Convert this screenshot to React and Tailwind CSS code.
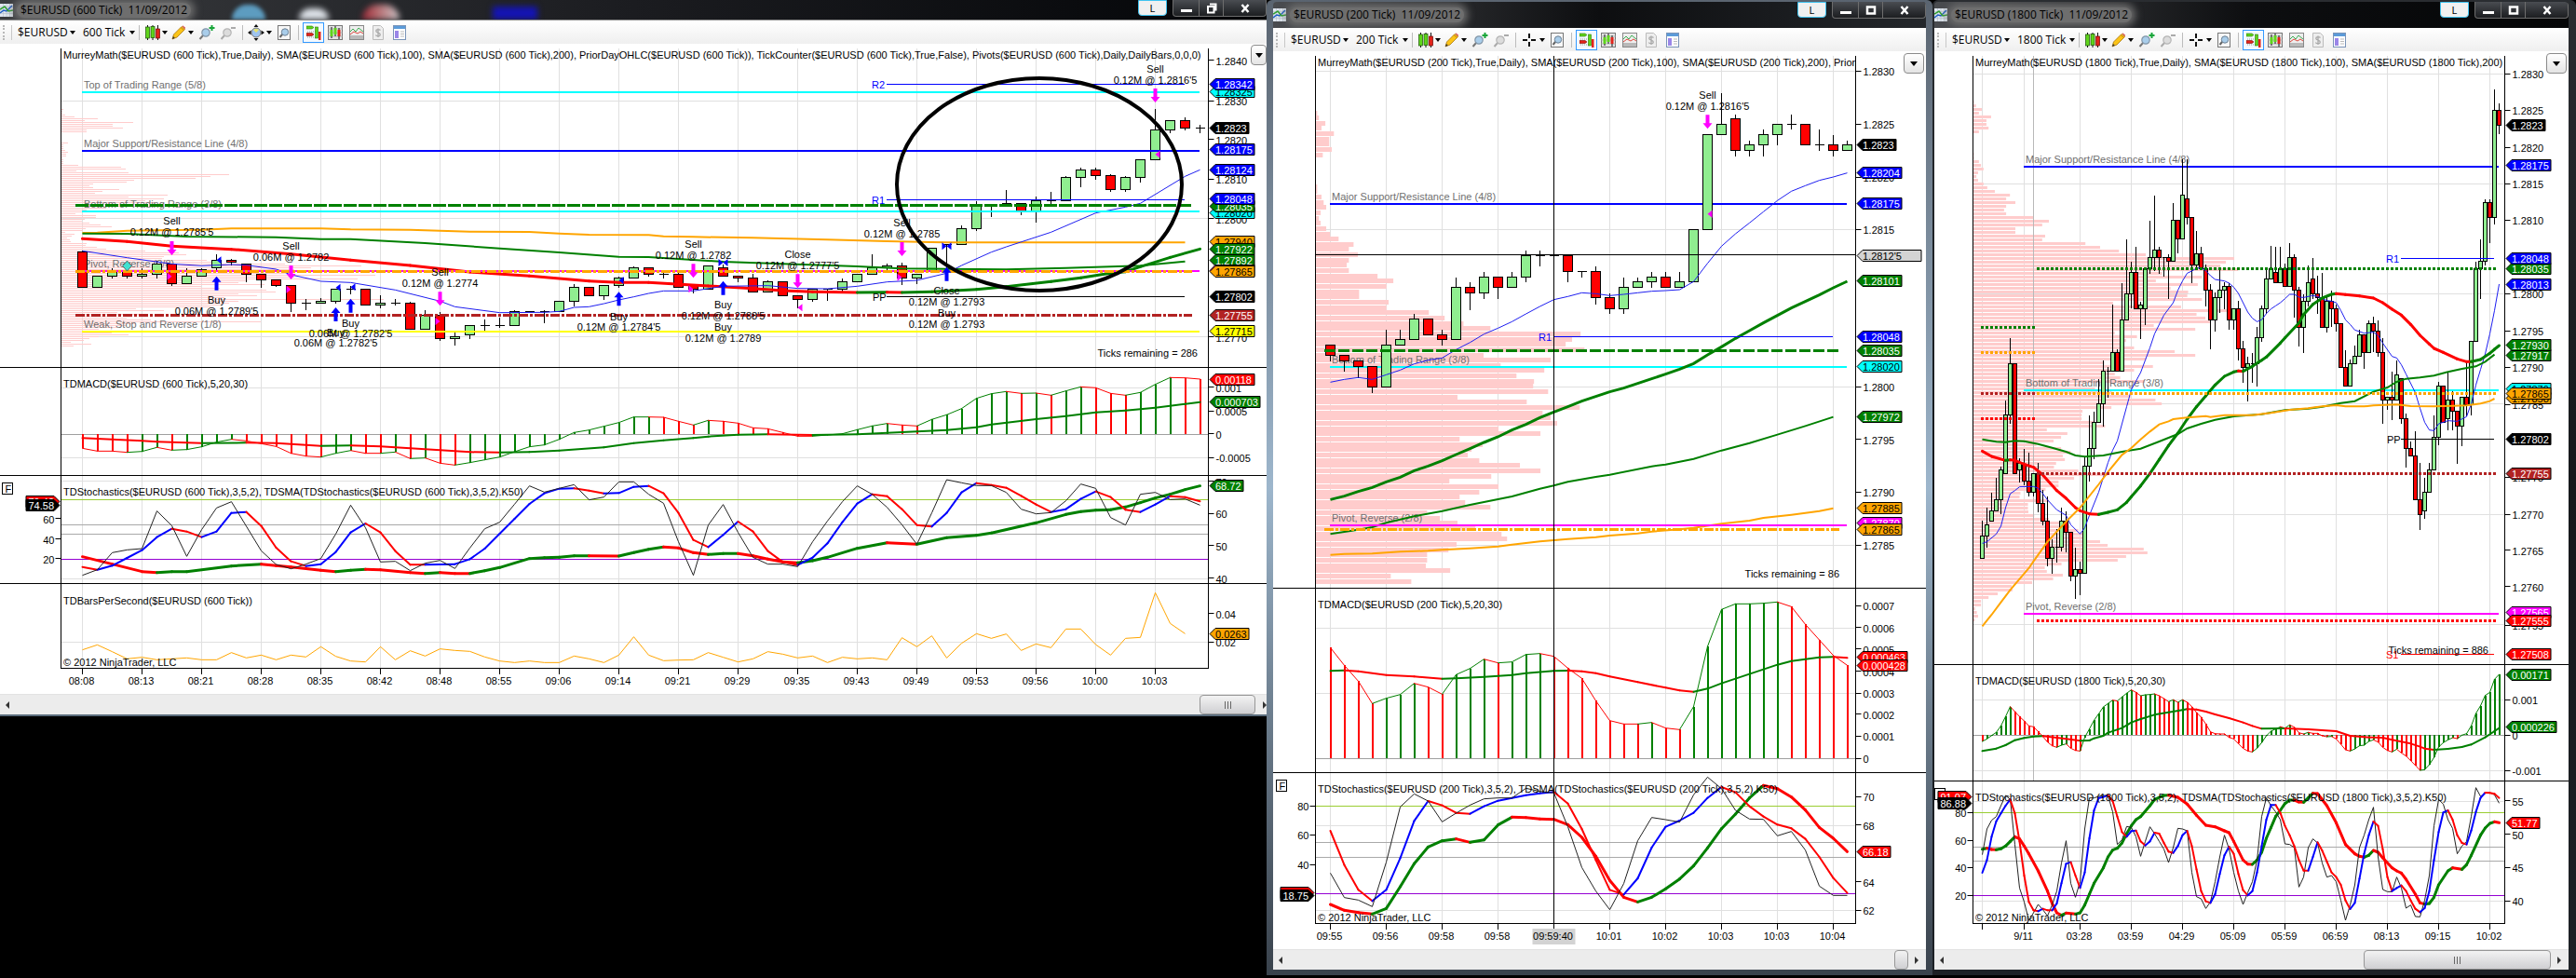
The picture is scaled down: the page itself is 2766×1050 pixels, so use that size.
import React from "react";
import { clsx } from "clsx";

// Series values are stored in thirds of a pixel, counted from the plot's top.
const makePlot = (x0, step, top, body) => ({
  x: (i) => x0 + step * i,
  y: (v) => top + v / 3,
  body,
});

const toPoints = (list) => list.map((p, i) => (Array.isArray(p) ? p : [i, p]));

/* ---------- plot parts ---------- */

const Line = ({ plot, data, color, width = 1 }) => (
  <polyline
    fill="none"
    stroke={color}
    strokeWidth={width}
    points={toPoints(data)
      .map(([i, v]) => `${plot.x(i)},${plot.y(v)}`)
      .join(" ")}
  />
);

const trendOf = (points, up, down) => {
  let last = down;
  return points.map(([, v], n) => {
    if (n > 0 && v < points[n - 1][1]) last = up;
    if (n > 0 && v > points[n - 1][1]) last = down;
    return last;
  });
};

// Line whose segments change colour with the direction
const TrendLine = ({ plot, data, up = "green", down = "red", width = 2 }) => {
  const points = toPoints(data);
  const colors = trendOf(points, up, down);
  return (
    <g strokeWidth={width} strokeLinecap="round">
      {points.slice(1).map(([i, v], n) => (
        <line
          key={n}
          x1={plot.x(points[n][0])}
          y1={plot.y(points[n][1])}
          x2={plot.x(i)}
          y2={plot.y(v)}
          stroke={colors[n + 1]}
        />
      ))}
    </g>
  );
};

const Histogram = ({ plot, data, zero }) => {
  const points = toPoints(data);
  const colors = trendOf(points, "green", "red");
  return (
    <g>
      {points.map(([i, v], n) => (
        <line
          key={n}
          x1={plot.x(i)}
          x2={plot.x(i)}
          y1={plot.y(zero)}
          y2={plot.y(v)}
          stroke={colors[n]}
          strokeWidth="2"
          shapeRendering="crispEdges"
        />
      ))}
      <TrendLine plot={plot} data={data} width={1} />
    </g>
  );
};

// [color, body top, body bottom, high, low]
const Candles = ({ plot, data }) => (
  <g stroke="black" shapeRendering="crispEdges">
    {data.map(([c, top, bottom, high, low], i) => {
      const x = plot.x(i);
      const px = (v) => Math.floor(plot.y(v)) + 0.5;
      return (
        <g key={i}>
          <line x1={x} x2={x} y1={px(high ?? top)} y2={px(low ?? bottom)} />
          <rect
            x={x - plot.body / 2}
            width={plot.body}
            y={px(top)}
            height={px(bottom) - px(top)}
            fill={c === "g" ? "#90ee90" : "red"}
          />
          {top === bottom && (
            <line x1={x - plot.body / 2} x2={x + plot.body / 2} y1={px(top)} y2={px(top)} />
          )}
        </g>
      );
    })}
  </g>
);

const Profile = ({ x, y, step, height, rows, unit = 1 }) => (
  <g fill="#ffcccc">
    {rows.map((w, i) => (
      <rect key={i} x={x} y={Math.round(y + step * i)} width={w / unit} height={height} />
    ))}
  </g>
);

const Level = ({ plot, v, x1, x2, color, width = 1, dash }) => (
  <line
    x1={x1}
    x2={x2}
    y1={Math.floor(plot.y(v)) + 0.5}
    y2={Math.floor(plot.y(v)) + 0.5}
    stroke={color}
    strokeWidth={width}
    strokeDasharray={dash}
    shapeRendering="crispEdges"
  />
);

const Label = ({ plot, x, v, children, color = "black", anchor = "start" }) => (
  <text x={x} y={Math.round(plot.y(v)) + 4} fill={color} textAnchor={anchor}>
    {children}
  </text>
);

const Arrow = ({ plot, i, tip, dir }) => {
  const x = plot.x(i);
  const y = plot.y(tip);
  const s = dir === "down" ? -1 : 1;
  return (
    <path
      d={`M${x} ${y} l-5 ${s * 6} h3 v${s * 9} h4 v${s * -9} h3 z`}
      fill={dir === "down" ? "magenta" : "blue"}
    />
  );
};

const Marker = ({ plot, i, v, color, dir }) => {
  const x = plot.x(i);
  const y = plot.y(v);
  return dir === "right" ? (
    <path d={`M${x - 5} ${y - 4} l5 4 l-5 4 z`} fill={color} />
  ) : (
    <path d={`M${x + 5} ${y - 4} l-5 4 l5 4 z`} fill={color} />
  );
};

// Executions: pairs of [text, v] centred on a bar plus an arrow
const Trade = ({ plot, i, tip, dir, lines }) => (
  <g>
    <Arrow plot={plot} i={i} tip={tip} dir={dir} />
    {lines.map(([text, v], n) => (
      <Label key={n} plot={plot} x={plot.x(i)} v={v} anchor="middle">
        {text}
      </Label>
    ))}
  </g>
);

const Tag = ({ plot, x, v, text, fill, color = "white", side = "right", width }) => {
  const y = Math.round(plot.y(v)) + 0.5;
  const w = width ?? text.length * 6;
  return side === "right" ? (
    <g>
      <path d={`M${x} ${y} l6 -6 h${w} v12 h${-w} z`} fill={fill} stroke="black" />
      <text x={x + 6} y={y + 4} fill={color}>
        {text}
      </text>
    </g>
  ) : (
    <g>
      <path d={`M${x} ${y} l-6 -6 h${-w} v12 h${w} z`} fill={fill} stroke="black" />
      <text x={x - 6} y={y + 4} fill={color} textAnchor="end">
        {text}
      </text>
    </g>
  );
};

const Scale = ({ plot, frame, labels, side = "right" }) =>
  labels.map(([text, v], n) => {
    const right = side === "right";
    const x = right ? frame.axisR : frame.axisL;
    return (
      <g key={n}>
        <line
          x1={x}
          x2={x + (right ? 6 : -6)}
          y1={Math.floor(plot.y(v)) - 0.5}
          y2={Math.floor(plot.y(v)) - 0.5}
          stroke="black"
        />
        <Label plot={plot} x={x + (right ? 8 : -7)} v={v} anchor={right ? "start" : "end"}>
          {text}
        </Label>
      </g>
    );
  });

const Pane = ({ id, frame, top, bottom, axisTop, plot, grid, children, scale }) => (
  <svg
    viewBox={`${frame.left} ${top} ${frame.width} ${bottom - top}`}
    className="block w-full font-['Liberation_Sans',Arial,sans-serif] text-[11px]"
  >
    <clipPath id={id}>
      <rect
        x={frame.axisL}
        y={axisTop ?? top}
        width={frame.axisR - frame.axisL}
        height={bottom - (axisTop ?? top)}
      />
    </clipPath>
    <g clipPath={`url(#${id})`}>
      {frame.grid.map((x) => (
        <line key={x} x1={x} x2={x} y1={top} y2={bottom} stroke="#e0e0e0" />
      ))}
      {grid.map((v) => (
        <Level key={v} plot={plot} v={v} x1={frame.axisL} x2={frame.axisR} color="#e0e0e0" />
      ))}
      {children}
    </g>
    <path
      d={`M${frame.axisL} ${axisTop ?? top} V${bottom} M${frame.axisR} ${axisTop ?? top} V${bottom}`}
      stroke="black"
    />
    <line
      x1={frame.left}
      x2={frame.left + frame.width}
      y1={bottom - 0.5}
      y2={bottom - 0.5}
      stroke="black"
    />
    {scale}
  </svg>
);

const TimeAxis = ({ frame, top, bottom, times, highlight }) => (
  <svg
    viewBox={`${frame.left} ${top} ${frame.width} ${bottom - top}`}
    className="block w-full font-['Liberation_Sans',Arial,sans-serif] text-[11px]"
  >
    {times.map(([x, text], n) => (
      <g key={n}>
        <line x1={x} x2={x} y1={top} y2={top + 6} stroke="black" />
        {text === highlight && (
          <rect x={x - 23} y={top + 5} width="46" height="17" fill="#d3d3d3" />
        )}
        <text x={x - 1} y={top + 17} textAnchor="middle">
          {text}
        </text>
      </g>
    ))}
  </svg>
);

const StochLevels = ({ plot, frame, levels }) =>
  levels.map(([v, color]) => (
    <Level key={v} plot={plot} v={v} x1={frame.axisL} x2={frame.axisR} color={color} />
  ));

const FlagBox = ({ x, y }) => (
  <g>
    <rect x={x} y={y} width="11" height="12" fill="white" stroke="black" />
    <text x={x + 3} y={y + 10}>
      F
    </text>
  </g>
);

/* ---------- toolbar icons ---------- */

const CandlesIcon = () => (
  <svg viewBox="0 0 16 16" className="h-4 w-4">
    <path d="M2.5 0v16M8 0v16M13.5 0v16" stroke="#111" />
    <rect x=".5" y="2" width="4" height="12" fill="#5fd51b" stroke="#1c4d08" strokeWidth=".7" />
    <rect x="6" y="1.5" width="4" height="12" fill="#5fd51b" stroke="#1c4d08" strokeWidth=".7" />
    <rect x="11.5" y="4" width="4" height="10" fill="#e2231a" stroke="#6b0a06" strokeWidth=".7" />
  </svg>
);

const PencilIcon = () => (
  <svg viewBox="0 0 16 16" className="h-4 w-4">
    <path d="M1 15l1.5-5L11 1.5l3.5 3L6 13z" fill="#fbc417" stroke="#a8730b" strokeWidth=".8" />
    <path d="M10 2.5l3.5 3" stroke="#c98a10" />
    <path d="M11.5 1l1-.6 2.6 2.4-.6 1.5z" fill="#d9534f" />
    <path d="M1 15l1-3 1.8 1.8z" fill="#333" />
  </svg>
);

const ZoomIcon = ({ minus }) => (
  <svg viewBox="0 0 18 16" className="h-4 w-[18px]">
    <path d="M1.5 15l4-4.5" stroke={minus ? "#aaa" : "#777"} strokeWidth="2" />
    <circle
      cx="8"
      cy="8"
      r="4.2"
      fill={minus ? "#dcdcdc" : "#a9cdea"}
      stroke={minus ? "#b5b5b5" : "#8296a8"}
      strokeWidth="1.2"
    />
    {minus ? (
      <path d="M12 3h5" stroke="#aaa" strokeWidth="2" />
    ) : (
      <path d="M11.5 3h6M14.5 0v6" stroke="#19a63a" strokeWidth="2" />
    )}
  </svg>
);

const TargetIcon = () => (
  <svg viewBox="0 0 18 18" className="h-[18px] w-[18px]">
    <circle cx="9" cy="9" r="5" fill="#9fc4f0" stroke="#777" />
    <path d="M6 6a5 5 0 0 1 6 0l-3 3z" fill="#e9e36b" />
    <path d="M9 0l2.5 3h-5zM9 18l2.5-3h-5zM0 9l3.5-2.5v5zM18 9l-3.5-2.5v5z" fill="#111" />
  </svg>
);

const CrosshairIcon = () => (
  <svg viewBox="0 0 18 18" className="h-[18px] w-[18px]">
    <path d="M9 2v5M9 11v5M2 9h5M11 9h5" stroke="#111" strokeWidth="2" />
  </svg>
);

const FindIcon = () => (
  <svg viewBox="0 0 16 16" className="h-4 w-4">
    <rect x="1.5" y=".5" width="13" height="15" fill="#f7f7f7" stroke="#777" />
    <path d="M3.5 13l3-3.5" stroke="#666" strokeWidth="2" />
    <circle cx="9" cy="7.5" r="3.7" fill="#a9cdea" stroke="#6c8093" />
  </svg>
);

const TraderIcon = () => (
  <svg viewBox="0 0 16 16" className="h-4 w-4">
    <path d="M1 7h10M1 13h10" stroke="#999" strokeDasharray="1 1" />
    <path d="M0 1h6l2 1.5L6 4H0z" fill="#5fd51b" stroke="#2b7a0b" strokeWidth=".6" />
    <path d="M0 8.5h6l2 1.5-2 1.5H0z" fill="#e2231a" stroke="#7d0d07" strokeWidth=".6" />
    <rect x="9.5" y="2" width="3" height="12" fill="#5fd51b" stroke="#2b7a0b" strokeWidth=".6" />
    <rect x="13" y="7" width="2.5" height="9" fill="#e2231a" />
  </svg>
);

const BarsBoxIcon = () => (
  <svg viewBox="0 0 16 16" className="h-4 w-4">
    <rect x=".5" y=".5" width="15" height="15" fill="#e5e5e5" stroke="#777" />
    <path d="M.5 4h15M.5 8h15M.5 12h15" stroke="#bbb" />
    <path d="M4 2v12M8 1v11M12 3v12" stroke="#111" />
    <path d="M2.5 5h3v7h-3zM6.5 3h3v7h-3z" fill="#5fd51b" />
    <path d="M10.5 5h3v7h-3z" fill="#e2231a" />
  </svg>
);

const IndicatorIcon = () => (
  <svg viewBox="0 0 16 16" className="h-4 w-4">
    <rect x=".5" y=".5" width="15" height="15" fill="#eee" stroke="#888" />
    <rect x="1" y="11" width="14" height="4" fill="#b9b9b9" />
    <path d="M1 7l3-3 3 3 3-4 5 4" stroke="#3cae53" fill="none" />
    <path d="M1 10l4-3 4 2 3-2 3 2" stroke="#e0463c" fill="none" />
  </svg>
);

const StrategyIcon = () => (
  <svg viewBox="0 0 16 16" className="h-4 w-4">
    <path d="M2.5.5h8l3 3v12h-11z" fill="#eee" stroke="#bbb" />
    <path
      d="M10.5 5.5C9 4 5.5 4.5 5.8 6.5S10.500 8 10.3 10.2 6.5 12.2 5.3 10.700M8 3.500v9.500"
      stroke="#aaa"
      strokeWidth="1.3"
      fill="none"
    />
  </svg>
);

const PanelIcon = () => (
  <svg viewBox="0 0 16 16" className="h-4 w-4">
    <rect x="1.5" y=".5" width="13" height="15" fill="white" stroke="#7a94b8" />
    <rect x="2" y="1" width="12" height="3" fill="#5b9bd9" />
    <rect x="3" y="6" width="4" height="8" fill="#9a86e8" />
    <path d="M9 7h4M9 9.5h4M9 12h4" stroke="#bbb" />
  </svg>
);

const Caret = ({ className }) => (
  <svg
    viewBox="0 0 6 4"
    className={clsx("pointer-events-none h-1 w-1.5 shrink-0", className)}
  >
    <path d="M0 0h6L3 4z" fill="black" />
  </svg>
);

/* ---------- window chrome ---------- */

const ToolButton = ({ label, wide, active, children }) => (
  <button
    type="button"
    aria-label={label}
    className={clsx(
      "flex h-[22px] shrink-0 items-center justify-center gap-0.5",
      wide ? "w-7" : "w-[23px]",
      active && "border border-[#3399ff] bg-[#f3f9ff]"
    )}
  >
    {children}
    {wide && <Caret />}
  </button>
);

const ToolSelect = ({ label, value, className }) => (
  <div className="flex items-center">
    <select
      aria-label={label}
      defaultValue={value}
      className={clsx("appearance-none bg-transparent text-[12px] leading-4", className)}
    >
      <option>{value}</option>
    </select>
    <Caret />
  </div>
);

const Divider = () => <span className="mx-1 h-4 w-px shrink-0 bg-[#bcbcbc]" />;

const Toolbar = ({ period, crosshair }) => (
  <div className="flex h-[25px] items-center bg-gradient-to-b from-white to-[#efefef] font-['Open_Sans','Noto_Sans',sans-serif] text-black">
    <span className="ml-[3px] h-4 border-l-2 border-dotted border-[#b8b8b8]" />
    <span className="mr-[6px] ml-[7px] h-4 w-px bg-[#c8c8c8]" />
    <ToolSelect label="Instrument" value="$EURUSD" className="w-14" />
    <span className="w-2" />
    <ToolSelect
      label="Period"
      value={period}
      className={period.length > 8 ? "w-14" : "w-[50px]"}
    />
    <Divider />
    <ToolButton label="Chart style" wide>
      <CandlesIcon />
    </ToolButton>
    <ToolButton label="Drawing tools" wide>
      <PencilIcon />
    </ToolButton>
    <ToolButton label="Zoom in">
      <ZoomIcon />
    </ToolButton>
    <ToolButton label="Zoom out">
      <ZoomIcon minus />
    </ToolButton>
    <Divider />
    <ToolButton label="Cursor" wide>
      {crosshair ? <CrosshairIcon /> : <TargetIcon />}
    </ToolButton>
    <ToolButton label="Find">
      <FindIcon />
    </ToolButton>
    <Divider />
    <ToolButton label="Chart trader" active>
      <TraderIcon />
    </ToolButton>
    <ToolButton label="Data series">
      <BarsBoxIcon />
    </ToolButton>
    <ToolButton label="Indicators">
      <IndicatorIcon />
    </ToolButton>
    <ToolButton label="Strategies">
      <StrategyIcon />
    </ToolButton>
    <ToolButton label="Properties">
      <PanelIcon />
    </ToolButton>
  </div>
);

const AppIcon = () => (
  <svg viewBox="0 0 14 14" className="h-3.5 w-3.5 shrink-0">
    <rect width="14" height="14" fill="#dfe6ee" />
    <path d="M3.5 0v14M7 0v14M10.5 0v14M0 3.5h14M0 7h14M0 10.5h14" stroke="#aab7c4" strokeWidth=".5" />
    <path d="M0 10l4-3 3 1 6-6" stroke="#1f5fc4" strokeWidth="1.5" fill="none" />
    <path d="M0 6l5-3 4 5 5-1" stroke="#2f9e2f" strokeWidth="1.5" fill="none" />
  </svg>
);

const CaptionButtons = ({ restore }) => (
  <div className="flex items-start">
    <button
      type="button"
      className="h-[17px] w-[31px] rounded-b-sm border border-[#3fc3f0] bg-[#f0f0f0] text-[11px] leading-[14px] text-black"
    >
      L
    </button>
    <div className="ml-1.5 flex h-[18px] rounded-b border border-t-0 border-[#6d6d6d] bg-gradient-to-b from-[#4a4d52] to-[#1c1e21]">
      <button type="button" aria-label="Minimize" className="flex w-[27px] items-end justify-center pb-1">
        <span className="h-[3px] w-3 bg-white" />
      </button>
      <button
        type="button"
        aria-label="Maximize"
        className="flex w-[27px] items-center justify-center border-x border-[#6d6d6d]"
      >
        <svg viewBox="0 0 12 12" className="h-3 w-3">
          {restore ? (
            <path d="M4 1.5h6.5v6H9M2 4h6.5v6.5H2z" stroke="white" strokeWidth="2" fill="none" />
          ) : (
            <rect x="2" y="2.5" width="8" height="7" stroke="white" strokeWidth="2.5" fill="none" />
          )}
        </svg>
      </button>
      <button type="button" aria-label="Close" className="flex w-[45px] items-center justify-center">
        <svg viewBox="0 0 10 10" className="h-2.5 w-2.5">
          <path d="M1.5 1l7 8M8.5 1l-7 8" stroke="white" strokeWidth="2.5" />
        </svg>
      </button>
    </div>
  </div>
);

const TitleBar = ({ title, restore, className }) => (
  <div className={clsx("relative flex overflow-hidden", className)}>
    <div className="flex items-center gap-1">
      <AppIcon />
      <h2 className="rounded-full bg-[#6e6e6e] px-1 font-['Open_Sans','Noto_Sans',sans-serif] text-[12px] leading-4 whitespace-pre text-black shadow-[0_0_8px_4px_#6e6e6e]">
        {title}
      </h2>
    </div>
    {restore && (
      <div className="ml-11 flex items-end gap-9">
        <span className="h-4 w-9 rounded-t-full bg-[#5d9cc0] blur-[2px]" />
        <span className="h-3 w-8 rounded-t-full bg-[#dfe4ea] blur-[3px]" />
        <span className="h-4 w-10 rounded-t-full bg-gradient-to-r from-[#9c2236] to-[#c9c4c8] blur-[3px]" />
        <span className="ml-16 h-3.5 w-12 bg-[#1414b4] blur-[3px]" />
      </div>
    )}
    <div className="ml-auto">
      <CaptionButtons restore={restore} />
    </div>
  </div>
);

const ScrollBar = ({ thumb, grip = true, end = "w-[19px] pr-2" }) => (
  <div className="flex h-[22px] items-center border-t border-[#e2e2e2] bg-[#ececec]">
    <button type="button" aria-label="Scroll left" className="flex w-4 justify-center">
      <svg viewBox="0 0 4 8" className="h-2 w-1">
        <path d="M4 0v8L0 4z" fill="#333" />
      </svg>
    </button>
    <button
      type="button"
      aria-label="Scroll position"
      className={clsx(
        "ml-auto flex h-[21px] items-center justify-center rounded-sm border border-[#979797] bg-gradient-to-b from-[#f3f3f3] to-[#cfcfd2]",
        thumb
      )}
    >
      {grip && (
        <span className="flex gap-0.5">
          <i className="h-2 w-px bg-[#666]" />
          <i className="h-2 w-px bg-[#666]" />
          <i className="h-2 w-px bg-[#666]" />
        </span>
      )}
    </button>
    <button type="button" aria-label="Scroll right" className={clsx("flex justify-end", end)}>
      <svg viewBox="0 0 4 8" className="h-2 w-1">
        <path d="M0 0v8l4-4z" fill="#333" />
      </svg>
    </button>
  </div>
);

const MenuButton = ({ className }) => (
  <button
    type="button"
    aria-label="Indicator list"
    className={clsx(
      "absolute flex h-[22px] items-center justify-center rounded-sm border border-[#8a8a8a] bg-gradient-to-b from-white to-[#e4e4e4]",
      className
    )}
  >
    <svg viewBox="0 0 8 5" className="h-[5px] w-2">
      <path d="M0 0h8L4 5z" fill="black" />
    </svg>
  </button>
);

/* ---------- 600 tick ---------- */

const grid600 = Array.from({ length: 19 }, (_, j) => 88.5 + 64 * j);
const frame600 = { left: 0, width: 1360, axisL: 65.5, axisR: 1297.5, grid: grid600 };

const times600 = [
  "08:08", "08:13", "08:21", "08:28", "08:35", "08:42", "08:48", "08:55", "09:06", "09:14",
  "09:21", "09:29", "09:35", "09:43", "09:49", "09:53", "09:56", "10:00", "10:03",
];

const profile600 = [
  2, 1, 1, 4, 14, 39, 25, 77, 55, 55, 66, 27, 27, 0, 0, 0, 0, 0, 7, 2, 2, 2, 4, 7, 5, 5, 1, 2, 2, 2,
  18, 64, 69, 16, 72, 180, 160, 144, 78, 70, 34, 30, 34, 62, 44, 36, 114, 72, 110, 90, 100, 90, 80,
  48, 27, 34, 15, 37, 37, 25, 22, 30, 42, 54, 26, 23, 4, 14, 11, 6, 9, 10, 27, 26, 38, 48, 90, 126,
  134, 110, 108, 156, 172, 240, 322, 268, 250, 584, 240, 337, 250, 318, 200, 190, 218, 150, 170,
  220, 230, 190, 210, 175, 346, 190, 180, 170, 160, 80, 110, 60, 90, 50, 70, 96, 214, 80, 70, 60,
  40, 50, 54, 72, 40, 30, 24, 10, 32, 13,
];

const candles600 = [
  ["r", 811, 925, 805], ["g", 889, 925], ["g", 873, 889, 861, 896], ["r", 875, 889, 840, 896],
  ["g", 883, 889, 862, 896], ["g", 850, 883, 838, 896], ["r", 850, 913, 850, 920],
  ["g", 889, 913, 862], ["g", 867, 889, 862], ["g", 838, 862, 817, 869], ["r", 838, 845, 832, 852],
  ["r", 850, 883, 850, 908], ["r", 883, 901, 883, 926], ["r", 901, 919, 901, 923],
  ["r", 919, 976, 919, 1004], ["g", 976, 976, 962, 998], ["g", 970, 976, 957],
  ["g", 931, 970, 931, 977], ["g", 932, 932, 918, 947], ["r", 931, 982], ["g", 976, 982, 950, 990],
  ["g", 975, 975, 962, 983], ["r", 976, 1060, 969], ["g", 1015, 1060, 996],
  ["r", 1015, 1090, 1003, 1097], ["g", 1084, 1090, 1070, 1112], ["g", 1048, 1078, 1048, 1090],
  ["g", 1048, 1048, 1026, 1067], ["g", 1048, 1048, 1020, 1054], ["g", 1003, 1048, 996],
  ["g", 1003, 1003], ["g", 1003, 1003, 996, 1040], ["g", 970, 1003], ["g", 925, 970, 912, 984],
  ["r", 925, 951], ["g", 919, 951, 919, 965], ["g", 895, 919, 888, 925], ["g", 862, 895, 855],
  ["r", 862, 883, 862, 890], ["g", 883, 883, 870, 896], ["r", 883, 925, 868],
  ["r", 919, 931, 912, 942], ["g", 856, 931], ["r", 862, 889, 850], ["r", 889, 895, 889, 908],
  ["r", 895, 940, 880], ["g", 907, 940, 900], ["r", 907, 952], ["r", 951, 964, 951, 990],
  ["g", 931, 964, 931, 970], ["g", 931, 931, 931, 966], ["g", 907, 931, 895, 940],
  ["g", 883, 907], ["g", 862, 883, 816], ["g", 856, 862, 848, 870], ["r", 856, 895, 843, 915],
  ["g", 883, 895, 883, 914], ["g", 799, 870], ["g", 787, 787, 787, 870], ["g", 736, 787, 724],
  ["g", 660, 736, 645, 742], ["g", 658, 658, 655, 698], ["g", 655, 655, 609],
  ["r", 655, 679, 655, 692], ["g", 647, 679, 632, 714], ["g", 647, 647, 615, 657],
  ["g", 571, 647, 564], ["g", 547, 571, 538, 600], ["r", 547, 565, 538, 578],
  ["r", 565, 610, 558, 616], ["g", 571, 610, 564, 617], ["g", 514, 571, 514, 585],
  ["g", 418, 514, 349], ["g", 388, 418, 388, 426], ["r", 388, 412, 375, 419],
  ["g", 412, 412, 399, 426],
];

const orange600 = [
  [0, 750], [1, 749], [3, 743], [6, 741], [8, 740], [10, 736], [16, 736], [18, 739], [22, 740],
  [26, 746], [30, 747], [32, 752], [34, 756], [38, 757], [39, 761], [41, 763], [45, 766],
  [50, 772], [54, 777], [57, 780], [58, 781], [74, 781],
];
const green600 = [
  [0, 752], [3, 753], [7, 762], [13, 764], [16, 770], [18, 770], [23, 783], [28, 800], [32, 813],
  [36, 827], [38, 828], [43, 843], [47, 850], [52, 858], [55, 865], [62, 868], [66, 863],
  [71, 856], [74, 842],
];
const sma600 = [
  [0, 769], [3, 778], [6, 793], [10, 803], [14, 818], [18, 838], [22, 855], [26, 876], [30, 889],
  [34, 905], [36, 910], [38, 910], [42, 921], [45, 929], [47, 936], [49, 940], [52, 942],
  [54, 941], [55, 942], [57, 940], [60, 932], [62, 923], [65, 907], [67, 895], [69, 880],
  [70, 875], [71, 859], [73, 829], [75, 802],
];
const ema600 = [
  [0, 808], [3, 830], [6, 850], [8, 856], [10, 852], [11, 854], [13, 867], [14, 885], [16, 906],
  [18, 910], [21, 934], [24, 970], [25, 988], [28, 1007], [31, 1006], [32, 1003], [33, 990],
  [34, 988], [35, 978], [36, 966], [37, 956], [38, 945], [39, 937], [41, 937], [43, 922],
  [46, 920], [48, 929], [50, 930], [52, 922], [54, 908], [56, 903], [58, 880], [59, 855],
  [61, 812], [62, 795], [65, 748], [68, 686], [70, 667], [71, 655], [74, 568], [75, 547],
];

const macd600 = [
  274, 283, 283, 287, 284, 271, 280, 278, 269, 254, 245, 250, 259, 268, 290, 299, 302, 290, 281,
  290, 290, 286, 307, 305, 322, 328, 320, 311, 302, 285, 269, 263, 245, 223, 215, 203, 191, 173,
  173, 174, 187, 199, 184, 187, 193, 208, 211, 223, 235, 235, 231, 227, 214, 202, 194, 199, 202,
  181, 166, 146, 113, 98, 91, 97, 96, 103, 89, 76, 79, 97, 103, 94, 68, 46, 47, 51,
];
const macdAvg600 = [
  [0, 241], [4, 250], [5, 253], [8, 257], [11, 256], [13, 257], [16, 266], [18, 265], [20, 268],
  [22, 274], [24, 280], [26, 286], [28, 287], [30, 286], [32, 281], [35, 271], [37, 257],
  [39, 248], [41, 241], [42, 236], [44, 230], [46, 229], [49, 231], [52, 229], [54, 224],
  [56, 220], [58, 215], [60, 206], [61, 197], [64, 180], [66, 170], [68, 158], [70, 152],
  [72, 143], [74, 131], [75, 125],
];
const k600 = [
  683, 665, 610, 601, 597, 476, 523, 622, 536, 466, 446, 525, 604, 648, 662, 647, 629, 550, 457,
  530, 640, 638, 668, 644, 635, 661, 595, 533, 512, 454, 395, 415, 403, 391, 440, 431, 382, 382,
  422, 451, 575, 683, 521, 455, 545, 625, 647, 647, 655, 575, 508, 446, 395, 422, 464, 520, 583,
  482, 375, 385, 394, 394, 416, 470, 485, 481, 443, 389, 403, 497, 521, 422, 416, 439, 437, 457,
];
const d600 = [
  656, 665, 652, 627, 602, 560, 533, 542, 560, 542, 482, 479, 524, 594, 638, 653, 647, 608, 545,
  516, 545, 605, 649, 649, 648, 647, 631, 597, 549, 501, 453, 419, 404, 403, 410, 419, 418, 398,
  395, 419, 482, 569, 592, 553, 510, 542, 605, 640, 650, 626, 580, 512, 452, 422, 428, 470, 521,
  526, 482, 416, 386, 392, 401, 427, 455, 479, 470, 437, 413, 431, 472, 479, 455, 428, 431, 445,
];
const k50600 = [
  [0, 623], [2, 647], [4, 671], [5, 674], [6, 671], [7, 671], [10, 653], [12, 647], [13, 652],
  [14, 656], [16, 667], [17, 671], [18, 667], [19, 664], [20, 665], [22, 674], [23, 677],
  [24, 674], [25, 677], [26, 677], [27, 668], [28, 658], [30, 629], [31, 626], [32, 625],
  [33, 620], [34, 620], [36, 621], [37, 610], [38, 599], [39, 592], [40, 595], [41, 610],
  [42, 616], [43, 613], [44, 613], [45, 620], [46, 631], [47, 640], [48, 643], [49, 636],
  [50, 625], [52, 596], [54, 578], [56, 583], [58, 562], [60, 554], [61, 547], [64, 514],
  [66, 487], [67, 478], [68, 473], [69, 472], [70, 463], [71, 449], [72, 434], [73, 422],
  [74, 407], [75, 395],
];
const bps600 = [
  923, 907, 929, 952, 947, 955, 952, 949, 955, 955, 932, 949, 940, 955, 940, 946, 913, 944, 959,
  962, 913, 955, 926, 943, 920, 925, 928, 946, 959, 964, 959, 964, 964, 943, 952, 964, 940, 881,
  940, 958, 956, 955, 932, 947, 962, 952, 929, 937, 949, 943, 964, 947, 952, 949, 955, 884, 913,
  878, 949, 902, 871, 886, 872, 925, 904, 916, 856, 856, 906, 940, 886, 883, 739, 838, 871,
];

const trades600 = [
  { i: 6, tip: 822, dir: "down", lines: [["Sell", 712], ["0.12M @ 1.2785'5", 748]] },
  { i: 14, tip: 900, dir: "down", lines: [["Sell", 793], ["0.06M @ 1.2782", 829]] },
  { i: 24, tip: 985, dir: "down", lines: [["Sell", 877], ["0.12M @ 1.2774", 912]] },
  { i: 9, tip: 890, dir: "up", lines: [["Buy", 967], ["0.06M @ 1.2789'5", 1003]] },
  { i: 18, tip: 962, dir: "up", lines: [["Buy", 1040], ["0.06M @ 1.2782'5", 1075]] },
  { i: 17, tip: 990, dir: "up", lines: [["Buy", 1070], ["0.06M @ 1.2782'5", 1105]] },
  { i: 36, tip: 940, dir: "up", lines: [["Buy", 1019], ["0.12M @ 1.2784'5", 1053]] },
  { i: 41, tip: 895, dir: "down", lines: [["Sell", 787], ["0.12M @ 1.2782", 823]] },
  {
    i: 43,
    tip: 905,
    dir: "up",
    lines: [["Buy", 982], ["0.12M @ 1.2788'5", 1018], ["Buy", 1054], ["0.12M @ 1.2789", 1090]],
  },
  { i: 48, tip: 928, dir: "down", lines: [["Close", 820], ["0.12M @ 1.2777'5", 856]] },
  { i: 55, tip: 825, dir: "down", lines: [["Sell", 717], ["0.12M @ 1.2785", 753]] },
  {
    i: 58,
    tip: 860,
    dir: "up",
    lines: [["Close", 937], ["0.12M @ 1.2793", 972], ["Buy", 1009], ["0.12M @ 1.2793", 1045]],
  },
  { i: 72, tip: 330, dir: "down", lines: [["Sell", 222], ["0.12M @ 1.2816'5", 259]] },
];

const markers600 = [
  [6, 890, "magenta", "right"], [14, 932, "magenta", "right"], [24, 1035, "magenta", "right"],
  [41, 931, "magenta", "right"], [55, 893, "magenta", "right"], [72, 497, "magenta", "left"],
  [48, 991, "magenta", "left"], [9, 838, "blue", "left"], [17, 926, "blue", "left"],
  [18, 925, "blue", "left"], [36, 903, "blue", "left"], [43, 846, "blue", "left"],
  [43, 846, "blue", "right"], [58, 793, "blue", "left"], [58, 793, "blue", "right"],
];

const tags600 = [
  ["1.28325", 293, "cyan", "black"], ["1.28342", 270, "blue"], ["1.2823", 411, "black"],
  ["1.28175", 480, "blue"], ["1.28124", 546, "blue"], ["1.28020", 685, "cyan", "black"],
  ["1.28035", 663, "green"], ["1.28048", 640, "blue"], ["1.27940", 777, "orange", "black"],
  ["1.27922", 801, "green"], ["1.27892", 838, "green"], ["1.27870", 870, "magenta"],
  ["1.27865", 874, "orange", "black"], ["1.27802", 953, "black"], ["1.27755", 1014, "#b22222"],
  ["1.27715", 1065, "yellow", "black"],
];

const Tags = ({ plot, x, tags }) =>
  tags.map(([text, v, fill, color]) => (
    <Tag key={text} plot={plot} x={x} v={v} text={text} fill={fill} color={color} />
  ));

const Chart600 = () => {
  const f = frame600;
  const price = makePlot(88.5, 16, 0, 10);
  const lower = makePlot(88.5, 16, 390, 10);
  return (
    <div>
      <Pane
        id="price600"
        frame={f}
        top={47}
        bottom={395}
        axisTop={52}
        plot={price}
        grid={[325, 703, 1084]}
        scale={
          <>
            <Scale
              plot={price}
              frame={f}
              labels={[
                ["1.2840", 197], ["1.2830", 327], ["1.2820", 452], ["1.2810", 580],
                ["1.2800", 707], ["1.2770", 1088],
              ]}
            />
            <Tags plot={price} x={1299} tags={tags600} />
          </>
        }
      >
        <Profile x={66} y={117} step={2} height={1} rows={profile600} />
        <Label plot={price} x={90} v={274} color="#707070">Top of Trading Range (5/8)</Label>
        <Label plot={price} x={90} v={463} color="#707070">Major Support/Resistance Line (4/8)</Label>
        <Label plot={price} x={90} v={658} color="#707070">Bottom of Trading Range (3/8)</Label>
        <Label plot={price} x={90} v={850} color="#707070">Pivot, Reverse (2/8)</Label>
        <Label plot={price} x={90} v={1045} color="#707070">Weak, Stop and Reverse (1/8)</Label>
        <Candles plot={price} data={candles600} />
        <Line plot={price} data={orange600} color="orange" width={2} />
        <Line plot={price} data={green600} color="green" width={2} />
        <TrendLine plot={price} data={sma600} width={3} />
        <Line plot={price} data={ema600} color="#1e1ef0" />
        <Level plot={price} v={295} x1={88} x2={1288} color="cyan" width={2} />
        <Level plot={price} v={484} x1={88} x2={1288} color="blue" width={2} />
        <Level plot={price} v={679} x1={88} x2={1288} color="cyan" width={2} />
        <Level plot={price} v={661} x1={81} x2={1280} color="green" width={3} dash="14 2" />
        <Level plot={price} v={871} x1={88} x2={1288} color="magenta" width={2} />
        <Level plot={price} v={874} x1={81} x2={1280} color="orange" width={3} dash="10 2 3 2" />
        <Level plot={price} v={1015} x1={81} x2={1280} color="#b22222" width={3} dash="10 2 3 2" />
        <Level plot={price} v={1066} x1={88} x2={1288} color="yellow" width={2} />
        <Level plot={price} v={271} x1={952} x2={1272} color="blue" />
        <Level plot={price} v={643} x1={952} x2={1272} color="blue" />
        <Level plot={price} v={955} x1={952} x2={1272} color="black" />
        <Label plot={price} x={936} v={273} color="blue">R2</Label>
        <Label plot={price} x={936} v={646} color="blue">R1</Label>
        <Label plot={price} x={937} v={957}>PP</Label>
        <path d="M136.5 280 l5 5.5 l-5 5.5 l-5 -5.5 z" fill="#40e0d0" stroke="#444" strokeWidth=".8" />
        {markers600.map(([i, v, color, dir], n) => (
          <Marker key={n} plot={price} i={i} v={v} color={color} dir={dir} />
        ))}
        {trades600.map((t, n) => (
          <Trade key={n} plot={price} {...t} />
        ))}
        <ellipse cx="1116" cy="198" rx="153" ry="114" fill="none" stroke="black" strokeWidth="4" />
        <Label plot={price} x={68} v={178}>
          MurreyMath($EURUSD (600 Tick),True,Daily), SMA($EURUSD (600 Tick),100), SMA($EURUSD (600
          Tick),200), PriorDayOHLC($EURUSD (600 Tick)), TickCounter($EURUSD (600
          Tick),True,False), Pivots($EURUSD (600 Tick),Daily,DailyBars,0,0,0)
        </Label>
        <Label plot={price} x={1286} v={1138} anchor="end">Ticks remaining = 286</Label>
      </Pane>

      <Pane
        id="macd600"
        frame={f}
        top={395}
        bottom={511}
        plot={lower}
        grid={[79, 304]}
        scale={
          <>
            <Scale
              plot={lower}
              frame={f}
              labels={[["0.001", 80], ["0.0005", 157], ["0", 230], ["-0.0005", 306]]}
            />
            <Tags plot={lower} x={1299} tags={[["0.00118", 51, "red"], ["0.000703", 122, "green"]]} />
          </>
        }
      >
        <Level plot={lower} v={229} x1={66} x2={1297} color="#a0a0a0" />
        <Histogram plot={lower} data={macd600} zero={228} />
        <TrendLine plot={lower} data={macdAvg600} />
        <Label plot={lower} x={68} v={67}>TDMACD($EURUSD (600 Tick),5,20,30)</Label>
      </Pane>

      <Pane
        id="stoch600"
        frame={f}
        top={511}
        bottom={627}
        plot={lower}
        grid={[379, 694]}
        scale={
          <>
            <Scale
              plot={lower}
              frame={f}
              side="left"
              labels={[["60", 503], ["40", 569], ["20", 632]]}
            />
            <Scale
              plot={lower}
              frame={f}
              labels={[["70", 383], ["60", 486], ["50", 590], ["40", 695]]}
            />
            <Tag plot={lower} x={64} v={443} text="79.42" fill="red" side="left" />
            <Tag plot={lower} x={64} v={456} text="74.58" fill="black" side="left" />
            <Tag plot={lower} x={1299} v={392} text="68.72" fill="green" />
            <FlagBox x={2.5} y={518.5} />
          </>
        }
      >
        <StochLevels
          plot={lower}
          frame={f}
          levels={[[439, "yellowgreen"], [520, "#a9a9a9"], [550, "#a9a9a9"], [631, "darkviolet"]]}
        />
        <TrendLine plot={lower} data={k50600} width={3} />
        <TrendLine plot={lower} data={d600} up="blue" />
        <Line plot={lower} data={k600} color="#222" />
        <Label plot={lower} x={68} v={415}>
          TDStochastics($EURUSD (600 Tick),3,5,2), TDSMA(TDStochastics($EURUSD (600 Tick),3,5,2).K50)
        </Label>
      </Pane>

      <Pane
        id="bps600"
        frame={f}
        top={627}
        bottom={718}
        plot={lower}
        grid={[898]}
        scale={
          <>
            <rect x="1298" y="717" width="62" height="2" fill="white" />
            <rect x="0" y="717" width="65" height="2" fill="white" />
            <Scale plot={lower} frame={f} labels={[["0.04", 809], ["0.02", 900]]} />
            <Tag plot={lower} x={1299} v={870} text="0.0263" fill="orange" color="black" />
          </>
        }
      >
        <Line plot={lower} data={bps600} color="orange" />
        <Label plot={lower} x={68} v={764}>TDBarsPerSecond($EURUSD (600 Tick))</Label>
        <Label plot={lower} x={68} v={964}>© 2012 NinjaTrader, LLC</Label>
      </Pane>
      <TimeAxis
        frame={f}
        top={718}
        bottom={745}
        times={times600.map((t, j) => [grid600[j], t])}
      />
    </div>
  );
};

/* ---------- 200 tick ---------- */

const grid200 = Array.from({ length: 10 }, (_, j) => 1428.5 + 60 * j);
const frame200 = { left: 1367, width: 701, axisL: 1412.5, axisR: 1992.5, grid: grid200 };
const times200 = [
  "09:55", "09:56", "09:58", "09:58", "09:59:40", "10:01", "10:02", "10:03", "10:03", "10:04",
];

const profile200 = [
  3, 7, 22, 13, 42, 31, 31, 37, 16, 0, 0, 0, 0, 0, 3, 3, 13, 18, 24, 11, 7, 11, 24, 33, 53, 88, 77,
  98, 77, 72, 77, 144, 181, 165, 101, 101, 170, 165, 264, 301, 345, 408, 619, 599, 584, 628, 392,
  549, 432, 534, 469, 510, 508, 543, 331, 493, 617, 530, 549, 564, 427, 525, 336, 390, 364, 355,
  382, 477, 525, 410, 312, 427, 382, 336, 349, 408, 260, 290, 331, 373, 434, 447, 329, 310, 260,
  260, 257, 314, 175, 223,
];

const candles200 = [
  ["r", 1111, 1144, 1111, 1162], ["r", 1144, 1162, 1144, 1196], ["r", 1162, 1180, 1162, 1215],
  ["r", 1180, 1246, 1180, 1265], ["g", 1111, 1246, 1060], ["g", 1094, 1111, 1060],
  ["g", 1027, 1094, 1008], ["r", 1027, 1078], ["r", 1078, 1094, 1060, 1112],
  ["g", 925, 1094, 891], ["r", 925, 943, 907, 996], ["g", 891, 943, 874, 960],
  ["r", 891, 925, 891, 960], ["g", 891, 925, 874], ["g", 823, 891, 805, 908],
  ["g", 823, 823, 805, 857], ["g", 823, 823], ["r", 823, 874, 823, 908], ["g", 874, 874, 874, 893],
  ["r", 874, 958, 856, 978], ["r", 958, 994, 943, 1010], ["g", 925, 994, 891, 1010],
  ["g", 907, 925, 891], ["g", 891, 907, 874, 925], ["r", 891, 925, 874], ["g", 907, 925, 874],
  ["g", 739, 907], ["g", 433, 739], ["g", 400, 433, 297], ["r", 382, 485, 367, 503],
  ["g", 466, 485, 450, 503], ["g", 433, 466, 415, 503], ["g", 400, 433, 400, 467],
  ["g", 400, 400, 366, 416], ["r", 400, 466], ["g", 466, 466, 415, 485],
  ["r", 466, 485, 433, 503], ["g", 466, 485, 450],
];

const ema200 = [
  1231, 1222, 1216, 1222, 1207, 1192, 1172, 1160, 1153, 1126, 1103, 1076, 1057, 1036, 1011, 987,
  965, 955, 943, 946, 952, 948, 943, 938, 936, 933, 907, 848, 793, 753, 718, 682, 646, 616, 598,
  581, 570, 557,
];
const sma200 = [
  1609, 1598, 1583, 1570, 1552, 1537, 1516, 1501, 1484, 1464, 1445, 1425, 1407, 1385, 1367, 1345,
  1327, 1310, 1292, 1277, 1262, 1250, 1235, 1220, 1205, 1189, 1171, 1143, 1117, 1090, 1065, 1040,
  1016, 992, 971, 950, 927, 906,
];
const green200 = [
  [0, 1720], [2, 1706], [3, 1698], [4, 1684], [6, 1663], [8, 1646], [10, 1626], [12, 1608],
  [13, 1599], [15, 1574], [16, 1564], [17, 1552], [19, 1536], [20, 1529], [23, 1502], [24, 1496],
  [26, 1478], [28, 1451], [30, 1427], [32, 1400], [34, 1372], [36, 1343],
];
const orange200 = [
  [0, 1787], [1, 1784], [3, 1783], [5, 1777], [7, 1774], [8, 1771], [10, 1766], [12, 1760],
  [13, 1754], [15, 1744], [17, 1736], [19, 1730], [20, 1725], [22, 1718], [23, 1712], [25, 1705],
  [26, 1700], [28, 1687], [30, 1677], [31, 1668], [33, 1658], [35, 1646], [36, 1637],
];

const macd200 = [
  16, 73, 124, 196, 179, 167, 131, 143, 166, 103, 83, 53, 65, 62, 38, 35, 44, 82, 115, 187, 251,
  262, 262, 257, 275, 280, 206, 12, -107, -125, -125, -127, -131, -116, -59, -9, 41, 73,
];
const macdAvg200 = [
  [0, 91], [1, 89], [2, 92], [4, 104], [6, 109], [8, 116], [9, 115], [11, 110], [13, 104],
  [14, 98], [16, 91], [17, 90], [18, 92], [19, 98], [20, 109], [22, 127], [24, 145], [25, 154],
  [26, 158], [27, 148], [28, 131], [30, 101], [32, 71], [33, 59], [35, 47], [36, 46], [37, 49],
];
const k200 = [
  742, 821, 829, 850, 707, 529, 487, 510, 577, 549, 523, 503, 500, 500, 469, 479, 484, 593, 724,
  800, 860, 776, 638, 563, 570, 578, 490, 433, 470, 540, 568, 569, 622, 608, 668, 784, 814, 814,
];
const d200 = [
  606, 716, 796, 832, 796, 694, 574, 510, 524, 548, 551, 527, 509, 500, 491, 485, 481, 518, 600,
  700, 796, 811, 759, 660, 593, 573, 548, 500, 465, 482, 527, 560, 586, 598, 632, 690, 758, 806,
];
const k50200 = [
  843, 862, 869, 874, 856, 786, 712, 658, 638, 632, 643, 635, 587, 562, 563, 568, 569, 586, 627,
  688, 766, 820, 835, 820, 793, 761, 719, 661, 599, 552, 500, 460, 470, 497, 539, 595, 630, 673,
];

const tags200 = [
  ["1.2823", 465, "black"], ["1.28204", 555, "blue"], ["1.28175", 653, "blue"],
  ["1.28101", 903, "green"], ["1.28048", 1083, "blue"], ["1.28035", 1127, "green"],
  ["1.28020", 1179, "cyan", "black"], ["1.27972", 1341, "green"],
  ["1.27885", 1635, "orange", "black"], ["1.27870", 1682, "magenta"],
  ["1.27865", 1705, "orange", "black"],
];

const Chart200 = () => {
  const f = frame200;
  const price = makePlot(1428.5, 15, 0, 10);
  const lower = makePlot(1428.5, 15, 690, 10);
  const cursor = <line x1="1668.5" x2="1668.5" y1="60" y2="992" stroke="black" />;
  return (
    <div>
      <Pane
        id="price200"
        frame={f}
        top={55}
        bottom={632}
        axisTop={60}
        plot={price}
        grid={[229, 739, 1246, 1757]}
        scale={
          <>
            <Scale
              plot={price}
              frame={f}
              labels={[
                ["1.2830", 232], ["1.2825", 402], ["1.2820", 573], ["1.2815", 742],
                ["1.2800", 1248], ["1.2795", 1418], ["1.2790", 1587], ["1.2785", 1758],
              ]}
            />
            <Tags plot={price} x={1994} tags={tags200} />
            <Tag
              plot={price}
              x={1994}
              v={821}
              text="1.2812'5"
              fill="#d3d3d3"
              color="black"
              width={63}
            />
          </>
        }
      >
        <Profile
          x={1413}
          y={118.5}
          step={5.653}
          height={5}
          rows={profile200}
          unit={2.178}
        />
        <Label plot={price} x={1430} v={634} color="#707070">Major Support/Resistance Line (4/8)</Label>
        <Label plot={price} x={1430} v={1159} color="#707070">Bottom of Trading Range (3/8)</Label>
        <Label plot={price} x={1430} v={1669} color="#707070">Pivot, Reverse (2/8)</Label>
        <Level plot={price} v={655} x1={1428} x2={1983} color="blue" width={2} />
        <Level plot={price} v={1180} x1={1428} x2={1983} color="cyan" width={2} />
        <Candles plot={price} data={candles200} />
        <Line plot={price} data={orange200} color="orange" width={2} />
        <Line plot={price} data={green200} color="green" width={2} />
        <Line plot={price} data={sma200} color="green" width={3} />
        <Line plot={price} data={ema200} color="#1e1ef0" />
        <Level plot={price} v={1129} x1={1422} x2={1975} color="green" width={3} dash="12 3" />
        <Level plot={price} v={1690} x1={1428} x2={1983} color="magenta" width={2} />
        <Level plot={price} v={1706} x1={1422} x2={1975} color="orange" width={3} dash="10 2 3 2" />
        <Level plot={price} v={1084} x1={1668} x2={1968} color="blue" />
        <Label plot={price} x={1652} v={1087} color="blue">R1</Label>
        <Marker plot={price} i={27} v={689} color="magenta" dir="left" />
        <Trade
          plot={price}
          i={27}
          tip={415}
          dir="down"
          lines={[["Sell", 307], ["0.12M @ 1.2816'5", 343]]}
        />
        <Level plot={price} v={820} x1={1412} x2={1992} color="black" />
        <Label plot={price} x={1415} v={202}>
          MurreyMath($EURUSD (200 Tick),True,Daily), SMA($EURUSD (200 Tick),100), SMA($EURUSD (200
          Tick),200), PriorDayOHLC($EURUSD (200 Tick))
        </Label>
        <Label plot={price} x={1975} v={1849} anchor="end">Ticks remaining = 86</Label>
        {cursor}
      </Pane>

      <Pane
        id="macd200"
        frame={f}
        top={632}
        bottom={830}
        plot={lower}
        grid={[-47, 163]}
        scale={
          <>
            <Scale
              plot={lower}
              frame={f}
              labels={[
                ["0.0007", -117], ["0.0006", -46], ["0.0005", 23], ["0.0004", 95],
                ["0.0003", 166], ["0.0002", 233], ["0.0001", 303], ["0", 376],
              ]}
            />
            <Tags plot={lower} x={1994} tags={[["0.000463", 45, "red"], ["0.000428", 71, "red"]]} />
          </>
        }
      >
        <Histogram plot={lower} data={macd200} zero={373} />
        <Level plot={lower} v={373} x1={1412} x2={1992} color="#a0a0a0" />
        <TrendLine plot={lower} data={macdAvg200} />
        <Label plot={lower} x={1415} v={-122}>TDMACD($EURUSD (200 Tick),5,20,30)</Label>
        {cursor}
      </Pane>

      <Pane
        id="stoch200"
        frame={f}
        top={830}
        bottom={992}
        plot={lower}
        grid={[590, 863]}
        scale={
          <>
            <rect x="1993" y="991" width="76" height="2" fill="white" />
            <rect x="1367" y="991" width="45" height="2" fill="white" />
            <Scale
              plot={lower}
              frame={f}
              side="left"
              labels={[["80", 528], ["60", 621], ["40", 717]]}
            />
            <Scale
              plot={lower}
              frame={f}
              labels={[["70", 499], ["68", 590], ["64", 773], ["62", 864]]}
            />
            <Tag plot={lower} x={1411} v={805} text="20.83" fill="red" side="left" />
            <Tag plot={lower} x={1411} v={812} text="18.75" fill="black" side="left" />
            <Tag plot={lower} x={1994} v={672} text="66.18" fill="red" />
            <FlagBox x={1370.5} y={837.5} />
          </>
        }
      >
        <StochLevels
          plot={lower}
          frame={f}
          levels={[[526, "yellowgreen"], [643, "#a9a9a9"], [691, "#a9a9a9"], [808, "darkviolet"]]}
        />
        <TrendLine plot={lower} data={k50200} width={3} />
        <TrendLine plot={lower} data={d200} up="blue" />
        <Line plot={lower} data={k200} color="#222" />
        <Label plot={lower} x={1415} v={471}>
          TDStochastics($EURUSD (200 Tick),3,5,2), TDSMA(TDStochastics($EURUSD (200 Tick),3,5,2).K50)
        </Label>
        <Label plot={lower} x={1415} v={886}>© 2012 NinjaTrader, LLC</Label>
        {cursor}
      </Pane>
      <TimeAxis
        frame={f}
        top={992}
        bottom={1019}
        times={times200.map((t, j) => [grid200[j], t])}
        highlight="09:59:40"
      />
    </div>
  );
};

/* ---------- 1800 tick ---------- */

const ticks1800 = [0, 9, 21, 32, 43, 54, 65, 76, 87, 98, 109].map((i) => 2128.5 + 5 * i);
const frame1800 = { left: 2077, width: 681, axisL: 2118.5, axisR: 2689.5, grid: ticks1800 };
const times1800 = [
  "", "9/11", "03:28", "03:59", "04:29", "05:09", "05:59", "06:59", "08:13", "09:15", "10:02",
];

const profile1800 = [
  1, 6, 20, 13, 42, 31, 31, 36, 13, 0, 0, 0, 0, 0, 1, 1, 13, 18, 24, 11, 7, 11, 24, 33, 51, 87, 78,
  100, 78, 73, 78, 144, 180, 164, 100, 100, 171, 164, 267, 302, 347, 411, 622, 602, 589, 631, 450,
  545, 435, 535, 470, 512, 510, 545, 333, 495, 620, 532, 553, 565, 430, 529, 337, 390, 364, 357,
  383, 480, 529, 412, 312, 428, 383, 337, 350, 409, 260, 290, 330, 375, 434, 449, 329, 260, 258,
  258, 286, 314, 175, 224, 209, 191, 150, 209, 232, 213, 218, 197, 192, 250, 320, 240, 203, 203,
  172, 112, 110, 180, 130, 130, 131, 145, 180, 210, 230, 250, 260, 270, 302, 320, 406, 415, 364,
  344, 210, 170, 175, 213, 190, 140, 91, 93, 58, 36, 18, 18, 4, 8, 11, 3,
];

const candles1800 = [
  ["g", 1727, 1798, 1676], ["g", 1690, 1726, 1632, 1763], ["g", 1645, 1678, 1585],
  ["g", 1610, 1645, 1537], ["g", 1513, 1610, 1500, 1655], ["g", 1337, 1525, 1287],
  ["g", 1171, 1337, 1086, 1362], ["r", 1171, 1525], ["g", 1492, 1513, 1475, 1551],
  ["r", 1495, 1549, 1443, 1560], ["r", 1549, 1585, 1455, 1598], ["g", 1525, 1585, 1525, 1598],
  ["r", 1525, 1621, 1488, 1648], ["r", 1621, 1678, 1577, 1690], ["r", 1678, 1798, 1597, 1823],
  ["g", 1762, 1798, 1735, 1847], ["g", 1762, 1762, 1702, 1810], ["g", 1678, 1762, 1632, 1775],
  ["r", 1678, 1714, 1645, 1776], ["r", 1714, 1855, 1714, 1869], ["g", 1834, 1855, 1762, 1928],
  ["r", 1834, 1846, 1808, 1916], ["g", 1501, 1846, 1470], ["g", 1445, 1501, 1337, 1550],
  ["g", 1361, 1445, 1323, 1478], ["g", 1301, 1361, 1220], ["g", 1195, 1301, 1158, 1373],
  ["g", 1195, 1195, 1180, 1280], ["g", 1135, 1195, 980], ["r", 1135, 1195, 1122],
  ["g", 1031, 1195, 910], ["g", 946, 1031, 769], ["g", 877, 946, 842, 990],
  ["r", 877, 994, 793], ["g", 982, 994, 970, 1090], ["g", 865, 994, 865, 1045],
  ["g", 829, 865, 709, 880], ["g", 805, 829, 628, 870], ["r", 805, 829, 793, 880],
  ["g", 829, 829, 829, 890], ["r", 829, 841, 817, 960], ["g", 709, 841, 651],
  ["r", 709, 769, 709, 815], ["g", 628, 769, 512], ["r", 640, 700, 512, 722],
  ["r", 700, 853, 700, 910], ["g", 817, 853, 743, 865], ["r", 817, 865, 792],
  ["r", 865, 934, 850, 985], ["r", 934, 1031, 912, 1124], ["g", 958, 1031, 940, 1067],
  ["g", 934, 958, 869, 1005], ["g", 922, 934, 908, 994], ["r", 922, 1031, 910, 1060],
  ["g", 994, 1031, 994, 1060], ["r", 994, 1123, 968, 1160], ["r", 1123, 1183, 1097, 1232],
  ["g", 1171, 1183, 1147, 1290], ["g", 1171, 1171, 1135, 1230], ["g", 1087, 1171, 1050, 1244],
  ["g", 994, 1087, 982, 1100], ["g", 898, 994, 867, 1008], ["g", 865, 898, 791],
  ["r", 877, 910, 792], ["g", 865, 910, 792], ["r", 865, 922, 848], ["g", 829, 922, 781],
  ["r", 829, 934, 817, 1020], ["r", 934, 1055, 922, 1113], ["g", 970, 1055, 946, 1136],
  ["g", 910, 970, 852, 985], ["r", 898, 946, 829, 960], ["r", 946, 958, 886, 1008],
  ["r", 958, 1055, 877], ["g", 970, 1055, 955, 1068], ["r", 970, 994, 934, 1050],
  ["r", 994, 1042, 980, 1067], ["r", 1042, 1183], ["r", 1183, 1243, 1125],
  ["g", 1171, 1243, 1155], ["g", 1147, 1171, 1110], ["g", 1078, 1147, 1060],
  ["r", 1078, 1135, 1078, 1185], ["g", 1042, 1135, 1030], ["r", 1042, 1066, 1017, 1133],
  ["r", 1066, 1135, 1030, 1146], ["r", 1135, 1288, 1087, 1362], ["g", 1279, 1288, 1279, 1317],
  ["r", 1279, 1288, 1195, 1350], ["g", 1207, 1288, 1158], ["r", 1219, 1348, 1219, 1362],
  ["r", 1348, 1444, 1330, 1503], ["r", 1444, 1468, 1420], ["r", 1468, 1609, 1388],
  ["r", 1609, 1657, 1488, 1704], ["g", 1585, 1645, 1537, 1668], ["g", 1513, 1585, 1488],
  ["g", 1408, 1513, 1335], ["g", 1243, 1408, 1228, 1433], ["r", 1243, 1360],
  ["g", 1288, 1348, 1195, 1384], ["r", 1288, 1324, 1258, 1385], ["r", 1324, 1372, 1324, 1492],
  ["g", 1279, 1372, 1279, 1434], ["r", 1279, 1304, 1158, 1340], ["g", 1099, 1304, 1099, 1337],
  ["g", 865, 1099, 840], ["g", 841, 865, 770, 960], ["g", 652, 841, 640, 853],
  ["r", 652, 700, 640, 782], ["g", 355, 700, 285, 722], ["r", 355, 404, 331, 430],
];

const ema1800 = [
  [0, 1750], [1, 1745], [3, 1720], [4, 1695], [5, 1635], [6, 1590], [7, 1580], [8, 1568],
  [11, 1567], [12, 1572], [13, 1590], [14, 1610], [16, 1642], [18, 1660], [19, 1690], [21, 1720],
  [22, 1700], [23, 1660], [25, 1585], [27, 1490], [28, 1450], [29, 1420], [30, 1365], [31, 1310],
  [32, 1255], [34, 1200], [35, 1160], [36, 1120], [37, 1075], [39, 1015], [41, 975], [42, 935],
  [43, 905], [44, 880], [45, 873], [46, 864], [47, 862], [48, 872], [49, 888], [50, 900],
  [52, 905], [53, 912], [54, 925], [55, 945], [56, 975], [57, 1005], [58, 1025], [59, 1036],
  [60, 1030], [61, 1010], [62, 995], [63, 985], [64, 975], [65, 962], [66, 948], [67, 948],
  [68, 957], [69, 958], [71, 952], [72, 955], [73, 962], [74, 968], [75, 970], [76, 975],
  [77, 1000], [78, 1030], [79, 1045], [80, 1063], [82, 1073], [84, 1070], [85, 1080],
  [86, 1105], [88, 1148], [89, 1153], [90, 1175], [91, 1205], [93, 1265], [94, 1315],
  [95, 1360], [96, 1385], [97, 1387], [98, 1365], [100, 1355], [102, 1357], [104, 1342],
  [105, 1300], [106, 1240], [107, 1190], [108, 1140], [109, 1075], [110, 1000], [111, 915],
];
const sma1800 = [
  [0, 1453], [2, 1470], [5, 1483], [6, 1481], [7, 1483], [9, 1495], [11, 1505], [13, 1530],
  [16, 1580], [18, 1605], [20, 1635], [21, 1645], [23, 1655], [25, 1657], [27, 1650], [29, 1642],
  [31, 1618], [32, 1600], [34, 1565], [36, 1525], [38, 1480], [40, 1435], [42, 1395], [44, 1350],
  [46, 1310], [48, 1275], [50, 1240], [52, 1212], [54, 1198], [55, 1195], [56, 1196], [58, 1180],
  [60, 1160], [61, 1150], [64, 1105], [65, 1088], [68, 1040], [69, 1013], [71, 980], [73, 960],
  [75, 948], [76, 946], [78, 949], [81, 953], [84, 960], [86, 975], [88, 996], [90, 1015],
  [92, 1045], [94, 1080], [96, 1108], [97, 1122], [99, 1135], [102, 1156], [104, 1165],
  [105, 1165], [107, 1158], [109, 1138], [110, 1125], [111, 1113],
];
const green1800 = [
  [0, 1415], [3, 1423], [5, 1424], [7, 1420], [9, 1421], [12, 1430], [15, 1442], [18, 1455],
  [20, 1467], [22, 1471], [26, 1467], [30, 1455], [34, 1445], [38, 1422], [42, 1398], [44, 1380],
  [47, 1365], [50, 1352], [54, 1341], [60, 1334], [65, 1321], [70, 1316], [73, 1310], [77, 1298],
  [80, 1292], [84, 1262], [87, 1248], [89, 1230], [91, 1220], [94, 1216], [97, 1210],
  [100, 1198], [103, 1188], [106, 1180], [108, 1165], [110, 1142],
];
const orange1800 = [
  [0, 2017], [2, 1980], [4, 1940], [6, 1900], [8, 1865], [10, 1830], [11, 1808], [14, 1745],
  [18, 1680], [21, 1635], [25, 1560], [27, 1520], [30, 1465], [32, 1443], [34, 1415], [36, 1390],
  [38, 1367], [40, 1357], [41, 1350], [44, 1345], [48, 1340], [49, 1343], [52, 1337], [58, 1337],
  [62, 1330], [66, 1320], [70, 1315], [73, 1309], [76, 1305], [78, 1309], [82, 1309], [84, 1306],
  [89, 1303], [92, 1308], [97, 1309], [101, 1307], [104, 1306], [107, 1300], [109, 1292],
  [110, 1284],
];

const macd1800 = [
  318, 310, 299, 289, 268, 238, 206, 222, 238, 252, 268, 271, 286, 302, 320, 332, 337, 330, 326,
  340, 347, 349, 305, 278, 250, 229, 207, 196, 185, 188, 175, 163, 152, 160, 171, 168, 167, 165,
  171, 180, 190, 184, 192, 184, 192, 206, 225, 240, 262, 287, 293, 294, 294, 305, 310, 325, 340,
  349, 352, 340, 322, 300, 285, 278, 271, 275, 265, 272, 290, 294, 289, 292, 292, 300, 303, 302,
  310, 327, 345, 349, 342, 332, 330, 318, 313, 320, 337, 347, 352, 343, 355, 365, 380, 395, 411,
  409, 393, 370, 336, 322, 313, 306, 309, 298, 293, 268, 228, 203, 170, 160, 118, 102,
];
const macdAvg1800 = [
  [0, 349], [3, 341], [5, 330], [7, 314], [9, 307], [11, 302], [13, 301], [16, 306], [18, 310],
  [21, 316], [23, 315], [24, 308], [26, 300], [27, 290], [30, 275], [32, 257], [34, 246],
  [37, 232], [40, 224], [43, 217], [44, 214], [46, 215], [48, 222], [50, 231], [53, 243],
  [56, 257], [58, 268], [60, 277], [65, 276], [70, 279], [76, 285], [79, 300], [82, 304],
  [86, 306], [88, 313], [92, 325], [94, 335], [95, 341], [97, 345], [100, 342], [103, 336],
  [105, 328], [108, 305], [110, 285], [111, 275],
];
const k1800 = [
  683, 600, 572, 560, 525, 492, 505, 650, 790, 835, 895, 870, 843, 860, 880, 845, 800, 710, 638,
  775, 820, 770, 600, 500, 500, 495, 492, 492, 545, 650, 635, 592, 595, 625, 688, 640, 593, 615,
  640, 665, 708, 660, 598, 600, 606, 740, 818, 825, 856, 835, 770, 690, 620, 665, 740, 800, 843,
  805, 770, 700, 560, 500, 525, 545, 570, 648, 650, 660, 787, 755, 660, 632, 645, 710, 755, 750,
  770, 830, 894, 845, 780, 660, 620, 570, 530, 690, 795, 802, 802, 755, 790, 855, 845, 882, 883,
  830, 750, 590, 505, 520, 570, 598, 680, 655, 640, 560, 467, 495, 485, 483, 490, 517,
];
const d1800 = [
  741, 700, 625, 575, 550, 525, 505, 550, 640, 750, 835, 862, 865, 857, 862, 862, 840, 775, 712,
  707, 750, 790, 740, 630, 540, 500, 497, 492, 510, 560, 610, 625, 607, 605, 640, 653, 640, 612,
  615, 645, 673, 677, 655, 620, 606, 655, 730, 800, 833, 838, 810, 745, 685, 657, 680, 745, 797,
  814, 800, 740, 655, 570, 523, 523, 548, 590, 620, 655, 700, 734, 734, 690, 643, 670, 705, 740,
  755, 780, 830, 858, 838, 760, 680, 620, 576, 590, 665, 755, 800, 790, 782, 800, 830, 857, 868,
  855, 800, 700, 610, 547, 540, 570, 620, 645, 650, 605, 545, 500, 483, 484, 487, 500,
];
const k501800 = [
  [0, 665], [1, 662], [2, 666], [3, 667], [4, 664], [5, 655], [6, 640], [7, 625], [8, 632],
  [9, 655], [10, 680], [12, 735], [14, 800], [15, 840], [16, 870], [17, 878], [18, 871],
  [20, 874], [21, 870], [22, 845], [23, 810], [24, 775], [26, 725], [27, 690], [28, 668],
  [29, 662], [30, 645], [31, 615], [32, 590], [33, 570], [34, 560], [36, 525], [37, 505],
  [39, 492], [40, 491], [42, 498], [44, 520], [46, 556], [48, 588], [50, 593], [52, 606],
  [53, 612], [54, 640], [55, 670], [56, 700], [57, 713], [58, 714], [59, 700], [60, 675],
  [61, 630], [62, 595], [63, 560], [64, 540], [65, 518], [66, 507], [67, 507], [68, 513],
  [69, 514], [70, 500], [71, 485], [72, 486], [74, 525], [76, 580], [78, 650], [80, 680],
  [81, 688], [82, 691], [83, 685], [84, 669], [85, 675], [86, 693], [88, 725], [89, 735],
  [90, 742], [91, 762], [93, 810], [94, 838], [95, 842], [96, 840], [97, 820], [98, 780],
  [100, 735], [101, 725], [103, 730], [104, 715], [105, 685], [107, 620], [108, 597], [109, 582],
  [110, 577], [111, 580],
];

const tags1800 = [
  ["1.2823", 402, "black"], ["1.28175", 531, "blue"], ["1.28035", 864, "green"],
  ["1.28048", 831, "blue"], ["1.28013", 915, "blue"], ["1.27917", 1142, "green"],
  ["1.27930", 1110, "green"], ["1.27870", 1252, "cyan", "black"],
  ["1.27858", 1282, "orange", "black"], ["1.27865", 1266, "orange", "black"],
  ["1.27802", 1413, "black"], ["1.27755", 1523, "#b22222"], ["1.27565", 1972, "magenta"],
  ["1.27555", 1997, "red"], ["1.27508", 2106, "red"],
];

const dotted1800 = [
  [865, 2187, 2680, "green"], [1054, 2127, 2185, "green"], [1135, 2127, 2185, "orange"],
  [1267, 2127, 2185, "#b22222"], [1348, 2127, 2185, "red"], [1267, 2187, 2680, "orange"],
  [1525, 2187, 2680, "#b22222"], [1999, 2187, 2680, "red"],
];

const Chart1800 = () => {
  const f = frame1800;
  const price = makePlot(2128.5, 5, 0, 4);
  const lower = makePlot(2128.5, 5, 690, 4);
  const session = <line x1="2183.5" x2="2183.5" y1="60" y2="992" stroke="#b8b8b8" />;
  return (
    <div>
      <Pane
        id="price1800"
        frame={f}
        top={55}
        bottom={714}
        axisTop={60}
        plot={price}
        grid={[238, 592, 946, 1301, 1657, 2012]}
        scale={
          <>
            <Scale
              plot={price}
              frame={f}
              labels={[
                ["1.2830", 240], ["1.2825", 358], ["1.2820", 477], ["1.2815", 595],
                ["1.2810", 711], ["1.2800", 948], ["1.2795", 1068], ["1.2790", 1185],
                ["1.2785", 1305], ["1.2775", 1540], ["1.2770", 1659], ["1.2765", 1775],
                ["1.2760", 1892], ["1.2755", 2017],
              ]}
            />
            <Tags plot={price} x={2691} tags={tags1800} />
          </>
        }
      >
        <Profile x={2119} y={108} step={4} height={3} rows={profile1800} unit={2.221} />
        {session}
        <Label plot={price} x={2175} v={514} color="#707070">Major Support/Resistance Line (4/8)</Label>
        <Label plot={price} x={2175} v={1234} color="#707070">Bottom of Trading Range (3/8)</Label>
        <Label plot={price} x={2175} v={1954} color="#707070">Pivot, Reverse (2/8)</Label>
        <Level plot={price} v={536} x1={2173} x2={2683} color="blue" width={2} />
        <Level plot={price} v={1256} x1={2173} x2={2683} color="cyan" width={2} />
        <Level plot={price} v={1975} x1={2173} x2={2683} color="magenta" width={2} />
        <Candles plot={price} data={candles1800} />
        <Line plot={price} data={ema1800} color="#1e1ef0" />
        <TrendLine plot={price} data={sma1800} width={3} />
        <Line plot={price} data={green1800} color="green" width={2} />
        <Line plot={price} data={orange1800} color="orange" width={2} />
        {dotted1800.map(([v, x1, x2, color], n) => (
          <Level key={n} plot={price} v={v} x1={x1} x2={x2} color={color} width={3} dash="3 2" />
        ))}
        <Level plot={price} v={832} x1={2578} x2={2678} color="blue" />
        <Level plot={price} v={1414} x1={2578} x2={2678} color="black" />
        <Level plot={price} v={2107} x1={2578} x2={2678} color="red" />
        <Label plot={price} x={2562} v={835} color="blue">R1</Label>
        <Label plot={price} x={2563} v={1417}>PP</Label>
        <Label plot={price} x={2562} v={2110} color="red">S1</Label>
        <Label plot={price} x={2672} v={2094} anchor="end">Ticks remaining = 886</Label>
        <Label plot={price} x={2121} v={202}>
          MurreyMath($EURUSD (1800 Tick),True,Daily), SMA($EURUSD (1800 Tick),100), SMA($EURUSD
          (1800 Tick),200)
        </Label>
      </Pane>

      <Pane
        id="macd1800"
        frame={f}
        top={714}
        bottom={839}
        plot={lower}
        grid={[185, 412]}
        scale={
          <>
            <Scale plot={lower} frame={f} labels={[["0.001", 187], ["0", 300], ["-0.001", 414]]} />
            <Tags
              plot={lower}
              x={2691}
              tags={[["0.00171", 102, "green"], ["0.000226", 270, "green"]]}
            />
          </>
        }
      >
        {session}
        <Level plot={lower} v={298} x1={2119} x2={2689} color="#a0a0a0" />
        <Histogram plot={lower} data={macd1800} zero={297} />
        <TrendLine plot={lower} data={macdAvg1800} />
        <Label plot={lower} x={2121} v={124}>TDMACD($EURUSD (1800 Tick),5,20,30)</Label>
      </Pane>

      <Pane
        id="stoch1800"
        frame={f}
        top={839}
        bottom={992}
        plot={lower}
        grid={[512, 832]}
        scale={
          <>
            <rect x="2690" y="991" width="76" height="2" fill="white" />
            <rect x="2077" y="991" width="41" height="2" fill="white" />
            <FlagBox x={2077.5} y={846.5} />
            <Scale
              plot={lower}
              frame={f}
              side="left"
              labels={[["80", 550], ["60", 639], ["40", 726], ["20", 816]]}
            />
            <Scale
              plot={lower}
              frame={f}
              labels={[["55", 512], ["50", 620], ["45", 726], ["40", 834]]}
            />
            <Tag plot={lower} x={2117} v={496} text="91.07" fill="red" side="left" />
            <Tag plot={lower} x={2117} v={516} text="86.88" fill="black" side="left" />
            <Tag plot={lower} x={2691} v={579} text="51.77" fill="red" />
          </>
        }
      >
        <StochLevels
          plot={lower}
          frame={f}
          levels={[[548, "yellowgreen"], [659, "#a9a9a9"], [704, "#a9a9a9"], [814, "darkviolet"]]}
        />
        <TrendLine plot={lower} data={k501800} width={3} />
        <Line plot={lower} data={k1800} color="#222" />
        <TrendLine plot={lower} data={d1800} up="blue" />
        <Label plot={lower} x={2121} v={498}>
          TDStochastics($EURUSD (1800 Tick),3,5,2), TDSMA(TDStochastics($EURUSD (1800
          Tick),3,5,2).K50)
        </Label>
        <Label plot={lower} x={2121} v={886}>© 2012 NinjaTrader, LLC</Label>
      </Pane>
      <TimeAxis
        frame={f}
        top={992}
        bottom={1019}
        times={times1800.map((t, j) => [ticks1800[j], t])}
      />
    </div>
  );
};

/* ---------- desktop ---------- */

const App = () => {
  return (
    <main className="grid min-h-screen grid-cols-[1360fr_715fr_691fr] items-start overflow-x-hidden bg-black">
      <section className="min-w-0 border-b-2 border-[#5a6c7c] bg-white">
        <TitleBar
          title="$EURUSD (600 Tick)  11/09/2012"
          restore
          className="h-[21px] bg-gradient-to-r from-[#3a3c3f] via-[#1b1c20] to-[#050608]"
        />
        <div className="h-px bg-[#8d8d8d]" />
        <Toolbar period="600 Tick" />
        <div className="relative">
          <Chart600 />
          <MenuButton className="top-px right-0 w-[17px]" />
        </div>
        <ScrollBar thumb="w-[60px]" end="w-3" />
      </section>

      <section className="min-w-0 rounded-t-md bg-gradient-to-b from-[#5a6470] via-[#9db6cc] to-[#39424c] px-[7px] pt-0.5 pb-1.5">
        <TitleBar
          title="$EURUSD (200 Tick)  11/09/2012"
          className="h-7 rounded-t bg-gradient-to-r from-[#4a4c50] via-[#0d0e10] to-[#24272b]"
        />
        <div className="relative bg-white">
          <Toolbar period="200 Tick" crosshair />
          <div className="relative">
            <Chart200 />
            <MenuButton className="top-0.5 right-0.5 w-[22px]" />
          </div>
          <ScrollBar thumb="w-[15px]" grip={false} />
        </div>
      </section>

      <section className="min-w-0 rounded-t-md bg-gradient-to-b from-[#2a2d31] via-[#15181b] to-[#1d2126] pt-0.5 pr-2 pb-1.5 pl-0.5">
        <TitleBar
          title="$EURUSD (1800 Tick)  11/09/2012"
          className="h-7 rounded-t bg-gradient-to-r from-[#4a4c50] via-[#0d0e10] to-[#050607]"
        />
        <div className="relative bg-white">
          <Toolbar period="1800 Tick" crosshair />
          <div className="relative">
            <Chart1800 />
            <MenuButton className="top-0.5 right-0.5 w-[22px]" />
          </div>
          <ScrollBar thumb="w-[201px]" />
        </div>
      </section>
    </main>
  );
};

export default App;
